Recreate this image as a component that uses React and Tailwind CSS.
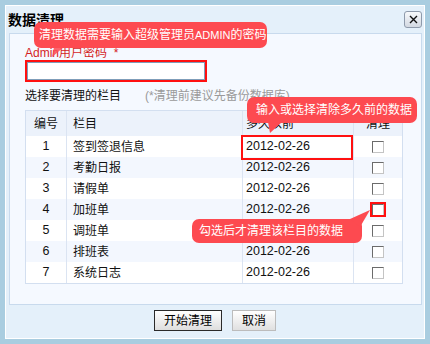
import React from 'react';

const rows = [
    { id: 1, name: '签到签退信息' },
    { id: 2, name: '考勤日报' },
    { id: 3, name: '请假单' },
    { id: 4, name: '加班单' },
    { id: 5, name: '调班单' },
    { id: 6, name: '排班表' },
    { id: 7, name: '系统日志' },
];

const Checkbox = () => (
    <span className="block w-[12px] h-[12px] bg-white border border-t-[#6b6b6b] border-l-[#6b6b6b] border-r-[#c4c4c4] border-b-[#c4c4c4]" />
);

const Tip = ({ className, children }) => (
    <div className={`absolute bg-[#fd4a50] text-white text-[12px] leading-none whitespace-nowrap rounded-[7px] flex items-center ${className}`}>
        {children}
    </div>
);

const App = () => {
    return (
        <div
            className="w-[430px] h-[344px] bg-[#a9cde0] p-[5px]"
            style={{ fontFamily: '"Liberation Sans", "Noto Sans CJK SC", sans-serif' }}
        >
            <div className="relative h-[334px] border border-white bg-[#e4f0fa]">
                {/* title bar */}
                <div className="h-[27px] flex items-center justify-between pl-[2px] pr-[2px]">
                    <span className="text-[14px] font-bold text-black leading-none">数据清理</span>
                    <button className="w-[18px] h-[17px] rounded-[3px] border border-[#8e9aab] bg-gradient-to-b from-[#f7f9fb] to-[#d3d9e2] flex items-center justify-center">
                        <svg width="9" height="9" viewBox="0 0 9 9">
                            <path d="M1 1 L8 8 M8 1 L1 8" stroke="#111" strokeWidth="1.4" />
                        </svg>
                    </button>
                </div>

                {/* content panel */}
                <div className="ml-[3px] mr-[2px] h-[272px] border border-[#c8daed] bg-[#f5f9ff] pl-[15px] pt-[12px]">
                    <div className="text-[12px] leading-[14px] text-[#d41f1f]">Admin用户密码 &nbsp;*</div>
                    <div className="w-[182px] h-[22px] border-2 border-[#ff1010]">
                        <input className="block w-full h-full bg-white border border-[#7f9db9] outline-none" />
                    </div>

                    <div className="mt-[6px] h-[16px] flex items-center text-[12px] leading-none">
                        <span className="text-[#111]">选择要清理的栏目</span>
                        <span className="ml-[24px] text-[#9a9a9a]">(*清理前建议先备份数据库)</span>
                    </div>

                    <div className="mt-[6px] w-[378px] border border-[#d3dff0] bg-white text-[12px] text-[#111]">
                        <div className="flex h-[25px] bg-[#ecf2fb] items-center">
                            <div className="w-[41px] text-center border-r border-[#dbe4f2] h-full flex items-center justify-center">编号</div>
                            <div className="w-[176px] pl-[6px] border-r border-[#dbe4f2] h-full flex items-center">栏目</div>
                            <div className="w-[111px] pl-[3px] border-r border-[#dbe4f2] h-full flex items-center">多久以前</div>
                            <div className="flex-1 h-full flex items-center justify-center">清理</div>
                        </div>
                        {rows.map((r, i) => (
                            <div
                                key={r.id}
                                className={`flex h-[21px] items-center ${i % 2 === 1 ? 'bg-[#f3f7fe]' : 'bg-white'}`}
                            >
                                <div className="w-[41px] h-full border-r border-[#dbe4f2] flex items-center justify-center text-[12.5px]">{r.id}</div>
                                <div className="w-[176px] h-full pl-[6px] border-r border-[#dbe4f2] flex items-center">{r.name}</div>
                                <div className="w-[111px] h-full pl-[3px] border-r border-[#dbe4f2] flex items-center text-[12.5px]">2012-02-26</div>
                                <div className="flex-1 h-full flex items-center justify-center">
                                    <Checkbox />
                                </div>
                            </div>
                        ))}
                    </div>
                </div>

                {/* buttons */}
                <div className="mt-[5px] flex justify-center gap-[10px] text-[12px]">
                    <button className="w-[68px] h-[21px] border border-[#2a2a2a] bg-gradient-to-b from-white to-[#dedede] text-black leading-none">开始清理</button>
                    <button className="w-[44px] h-[21px] border border-[#bcbcbc] bg-gradient-to-b from-white to-[#e0e0e0] text-black leading-none">取消</button>
                </div>

                {/* annotations */}
                <div className="absolute left-[235px] top-[129px] w-[112px] h-[25px] border-2 border-[#ff1010]" />
                <div className="absolute left-[364px] top-[196px] w-[16px] h-[15px] border-2 border-[#ff1010]" />

                <Tip className="left-[28px] top-[16px] w-[233px] h-[26px] pl-[5px]">
                    清理数据需要输入超级管理员<span className="text-[11px]">ADMIN</span>的密码
                </Tip>
                <svg className="absolute left-[44px] top-[41px]" width="16" height="11" viewBox="0 0 16 11">
                    <path d="M4 0 L14 0 L2 10 Z" fill="#fd4a50" opacity="0.85" />
                </svg>

                <Tip className="left-[241px] top-[91px] w-[170px] h-[26px] pl-[9px]">
                    输入或选择清除多久前的数据
                </Tip>
                <svg className="absolute left-[260px] top-[116px]" width="18" height="12" viewBox="0 0 18 12">
                    <path d="M2 0 L16 0 L4 11 Z" fill="#fd4a50" />
                </svg>

                <Tip className="left-[186px] top-[213px] w-[170px] h-[24px] pl-[7px]">
                    勾选后才清理该栏目的数据
                </Tip>
                <svg className="absolute left-[344px] top-[203px]" width="22" height="20" viewBox="0 0 22 20">
                    <path d="M0 10 L20 1 L10 18 Z" fill="#fd4a50" />
                </svg>
            </div>
        </div>
    );
};

export default App;
